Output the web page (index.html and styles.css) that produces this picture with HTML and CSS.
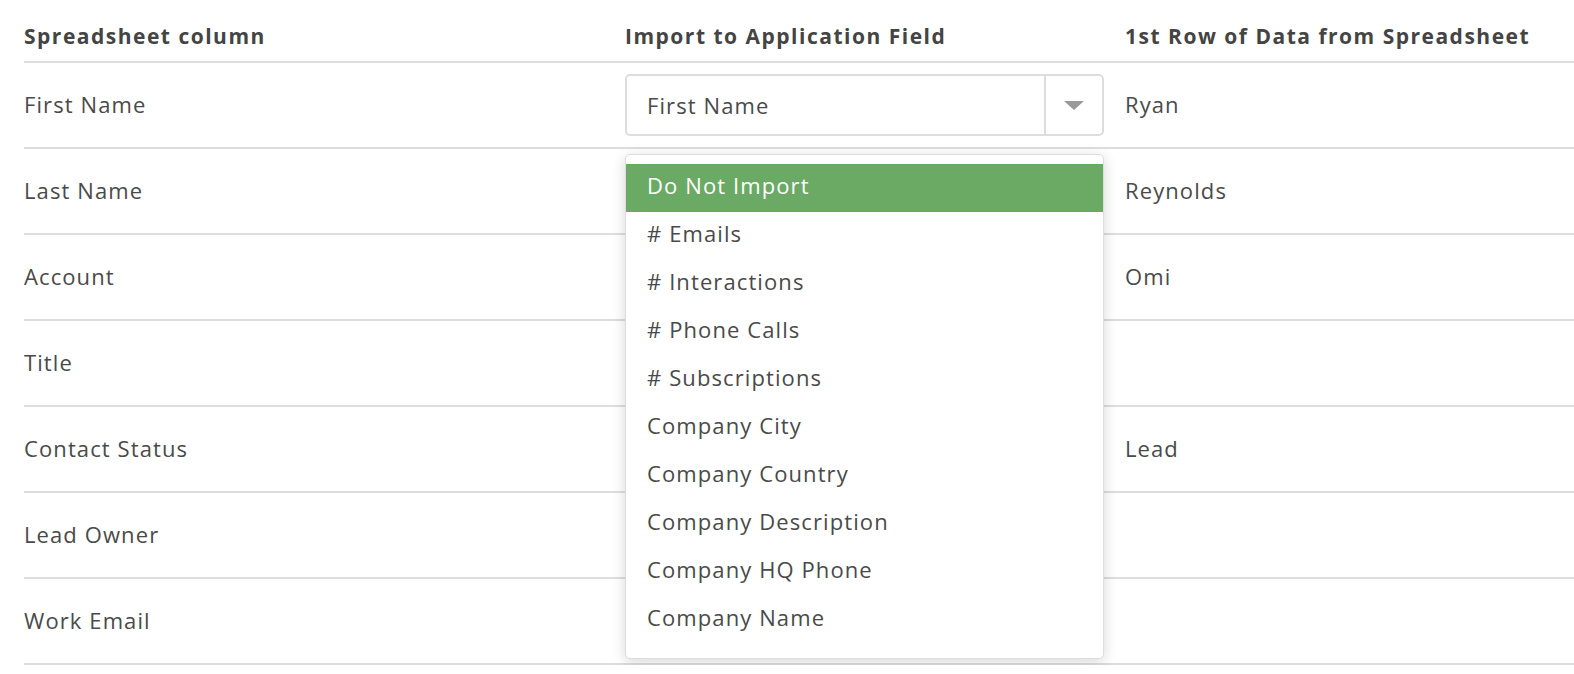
FILE: index.html
```html
<!DOCTYPE html>
<html lang="en">
<head>
  <meta charset="UTF-8">
  <meta name="viewport" content="width=device-width, initial-scale=1">
  <title>Map Columns</title>
  <link rel="stylesheet" href="styles.css">
</head>
<body>
  <div class="mapping">
    <div class="row head">
      <div>Spreadsheet column</div>
      <div>Import to Application Field</div>
      <div>1st Row of Data from Spreadsheet</div>
    </div>

    <div class="row">
      <div>First Name</div>
      <div class="field">
        <div class="select">
          <span class="select-value">First Name</span>
          <span class="select-arrow"><span class="caret"></span></span>
        </div>
        <ul class="options">
          <li class="active">Do Not Import</li>
          <li># Emails</li>
          <li># Interactions</li>
          <li># Phone Calls</li>
          <li># Subscriptions</li>
          <li>Company City</li>
          <li>Company Country</li>
          <li>Company Description</li>
          <li>Company HQ Phone</li>
          <li>Company Name</li>
        </ul>
      </div>
      <div>Ryan</div>
    </div>
    <div class="row"><div>Last Name</div><div></div><div>Reynolds</div></div>
    <div class="row"><div>Account</div><div></div><div>Omi</div></div>
    <div class="row"><div>Title</div><div></div><div></div></div>
    <div class="row"><div>Contact Status</div><div></div><div>Lead</div></div>
    <div class="row"><div>Lead Owner</div><div></div><div></div></div>
    <div class="row"><div>Work Email</div><div></div><div></div></div>
  </div>
</body>
</html>
```

FILE: styles.css
```css
body { margin: 0 0 0 24px; font-family: "Open Sans", Lato, sans-serif; color: #4a4a4a; background: #fff; overflow: hidden; }
.mapping { font-size: 22px; letter-spacing: 1.1px; }
.row { display: grid; grid-template-columns: 601px 500px 1fr; align-items: center; height: 82px; padding-bottom: 2px; border-bottom: 2px solid #ddd; }
.row.head { height: 51px; padding: 10px 0 0; font-weight: bold; font-size: 21px; letter-spacing: 1.5px; color: #444; }
.field { position: relative; margin-top: 2px; }
.select { display: flex; width: 479px; height: 62px; box-sizing: border-box; border: 2px solid #ddd; border-radius: 5px; background: #fff; }
.select-value { flex: 1; display: flex; align-items: center; padding-left: 20px; }
.select-arrow { width: 56px; border-left: 2px solid #ddd; display: flex; align-items: center; justify-content: center; }
.caret { width: 0; height: 0; border-left: 10px solid transparent; border-right: 10px solid transparent; border-top: 9px solid #999; }
.options { position: absolute; top: 80px; left: 0; width: 479px; box-sizing: border-box; margin: 0; padding: 9px 0 14px; list-style: none; background: #fff; border: 1px solid #ddd; border-radius: 5px; box-shadow: 0 3px 14px rgba(0,0,0,0.16); z-index: 2; }
.options li { height: 48px; line-height: 42px; padding-left: 21px; }
.options li.active { background: #6aaa64; color: #fff; }
```
